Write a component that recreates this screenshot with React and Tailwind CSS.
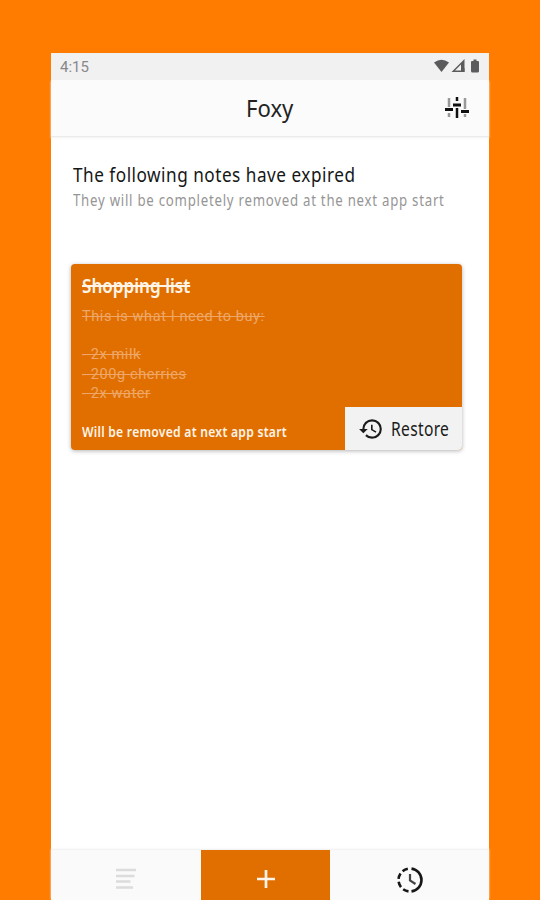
import React from 'react';
import { MdHistory } from 'react-icons/md';

const noteLines = ['This is what I need to buy:', '', '- 2x milk', '- 200g cherries', '- 2x water'];

const StatusIcons = () => (
    <svg width="50" height="18" viewBox="0 0 50 18" fill="#5b5b5d">
        <path d="M1 4.500Q8.500 -1 16 4.500L8.500 14Z" />
        <path fillRule="evenodd" d="M18.500 14L31.500 1V14ZM22 12.500H28V6.500Z" />
        <path d="M28 10H31.500V14H28Z" />
        <path d="M40.500 1.500H43.500V3H45Q46 3 46 4V13Q46 14.500 44.500 14.500H39.500Q38 14.500 38 13V4Q38 3 39 3H40.500Z" />
    </svg>
);

const SlidersIcon = () => (
    <svg width="26" height="22" viewBox="0 0 26 22" fill="none" stroke="#111" strokeWidth="2.500">
        <path stroke="#999" d="M5 1V10M5 16V20M21 1V12M21 17V20" />
        <path d="M13 0V4M13 11V21" />
        <path strokeWidth="3" d="M1 12.500H9M9 8H17M17 14.500H25" />
    </svg>
);

// Clock with a solid right half and a dashed left half
const ExpiredIcon = () => (
    <svg width="28" height="28" viewBox="0 0 28 28" fill="none" stroke="#161616" strokeWidth="2.600">
        <path d="M15.500 2.600A11.500 11.500 0 0 1 15.500 25.400" />
        <path strokeDasharray="5.800 3" d="M12.500 25.400A11.500 11.500 0 0 1 12.500 2.600" />
        <path stroke="#444" strokeWidth="2.200" d="M14 8V14.500L19.500 18" />
    </svg>
);

const App = () => {
    return (
        <div className="h-[900px] w-[540px] overflow-hidden bg-[#ff7c00] pt-[53px] font-['Noto_Sans',sans-serif]">
            <div className="mx-auto flex h-[847px] w-[438px] flex-col bg-white">
                <div className="flex h-[27px] shrink-0 items-center justify-between bg-[#f1f1f2] pl-[9px] pr-[6px]">
                    <span className="pt-[2px] font-[Roboto,sans-serif] text-[15px] leading-none text-[#88888a]">4:15</span>
                    <StatusIcons />
                </div>

                <header className="grid h-[57px] shrink-0 grid-cols-[1fr_auto_1fr] items-center border-b border-[#ebebeb] bg-[#fbfbfb] shadow-[0_1px_2px_#f2f2f2]">
                    <span />
                    <h1 className="scale-x-[.92] text-[24px] leading-none text-[#222]">Foxy</h1>
                    <span className="justify-self-end pr-[19px]"><SlidersIcon /></span>
                </header>

                <main className="flex-1">
                    <div className="h-[127px] whitespace-nowrap pl-[22px] pt-[25px]">
                        <h2 className="origin-left scale-x-[.858] text-[20px] leading-[25px] tracking-[.6px] text-[#161616]">
                            The following notes have expired
                        </h2>
                        <p className="origin-left scale-x-[.827] text-[16px] leading-[27px] tracking-[.9px] text-[#969696]">
                            They will be completely removed at the next app start
                        </p>
                    </div>

                    <div className="ml-5 flex h-[186px] w-[391px] flex-col overflow-hidden rounded bg-[#e06f00] shadow-[0_1px_4px_rgba(0,0,0,.3)]">
                        <div className="flex-1 whitespace-nowrap pl-[11px] pt-[9px]">
                            <h3 className="w-max origin-left scale-x-[.855] text-[20px] font-semibold leading-[26px] text-[#fff4e8] line-through decoration-[1.5px]">
                                Shopping list
                            </h3>
                            <div className="mt-2 font-[Roboto,sans-serif] text-[15.500px] leading-[19.200px] text-[#eea768]">
                                {noteLines.map((line, index) => (
                                    <p key={index} className="h-[19.200px] w-max origin-left scale-x-[.94] tracking-[.6px] line-through decoration-[1px]">
                                        {line}
                                    </p>
                                ))}
                            </div>
                        </div>
                        <div className="flex h-[43px] shrink-0 items-center justify-between whitespace-nowrap pl-[11px]">
                            <p className="w-[205px] origin-left scale-x-[.865] pt-[5px] text-[14px] font-semibold tracking-[.3px] text-[#fff4e8]">
                                Will be removed at next app start
                            </p>
                            <button className="flex h-full w-[117px] items-center bg-[#f2f2f2] pl-[13px] text-[#1b1b1b]">
                                <MdHistory size={26} className="shrink-0" />
                                <span className="ml-[7px] origin-left scale-x-[.82] pt-[2px] text-[19px] tracking-[.4px]">Restore</span>
                            </button>
                        </div>
                    </div>
                </main>

                <nav className="grid h-[50px] shrink-0 grid-cols-[150px_129px_159px] bg-[#fafafa] shadow-[0_-1px_2px_#eeeeee]">
                    <div className="flex justify-center pt-[18px]">
                        <svg width="20" height="22" viewBox="0 0 20 22" stroke="#dcdcdc" strokeWidth="2.300">
                            <path d="M0 2H20M0 8H18.500M0 13.500H14.500M0 19.500H17" />
                        </svg>
                    </div>
                    <div className="flex justify-center bg-[#e06f00] pt-[19px]">
                        <svg width="20" height="20" viewBox="0 0 20 20" stroke="#fff4ea" strokeWidth="2.700">
                            <path d="M10 1V19M1 10H19" />
                        </svg>
                    </div>
                    <div className="flex justify-center pt-[16px]">
                        <ExpiredIcon />
                    </div>
                </nav>
            </div>
        </div>
    );
};

export default App;
